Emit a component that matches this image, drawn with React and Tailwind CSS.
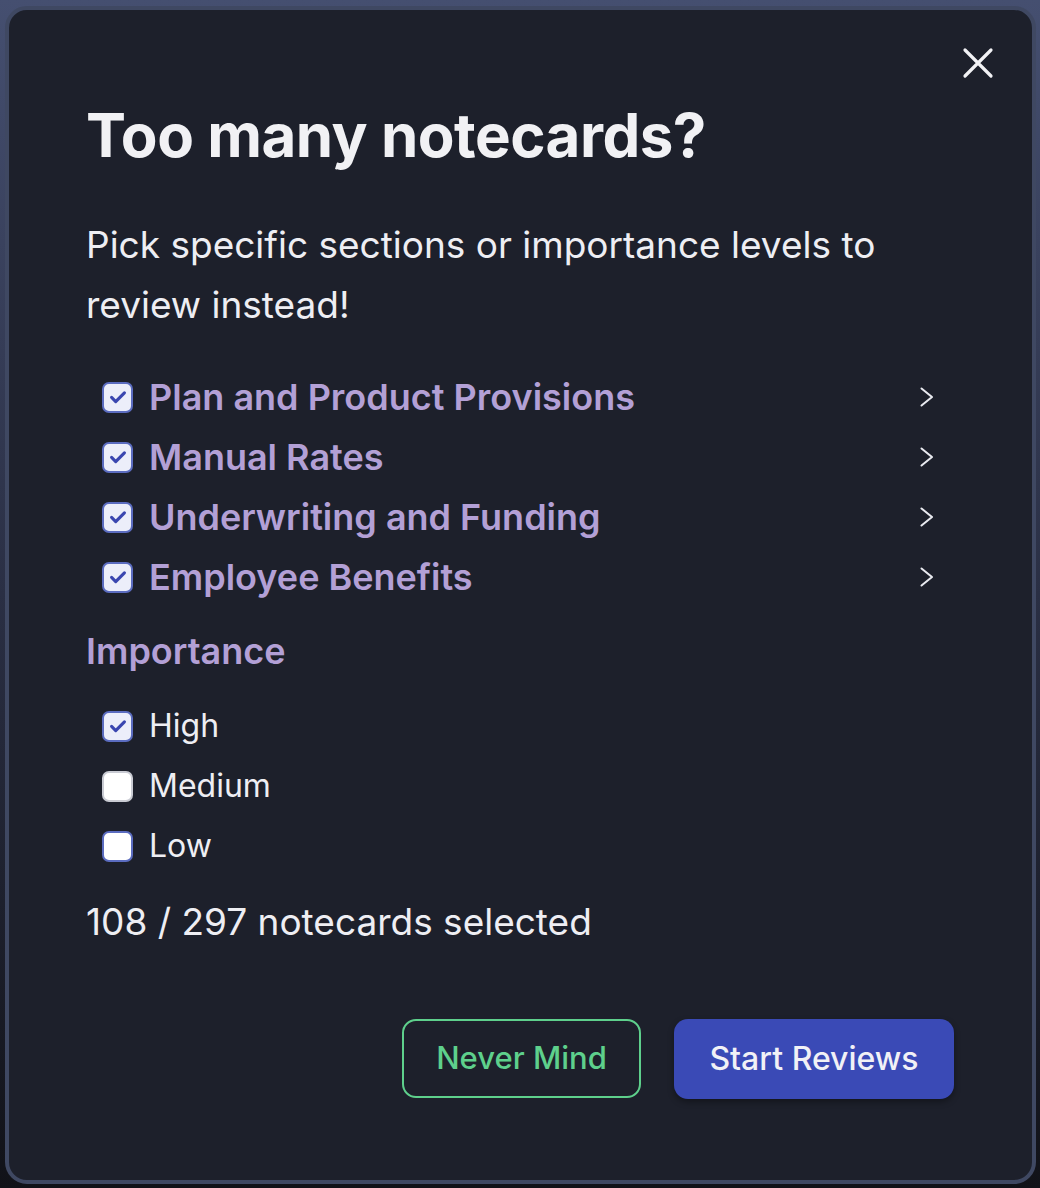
import React from "react";

const font = { fontFamily: "Inter, 'Noto Sans', sans-serif" };

function Check({ checked, blue }) {
  return (
    <span
      className={
        "flex h-[31px] w-[31px] shrink-0 items-center justify-center rounded-[7px] border-2 " +
        (checked ? "border-[#5b6cc0] bg-[#eceefa]" : blue ? "border-[#5b6cc0] bg-white" : "border-[#c9cbd3] bg-white")
      }
    >
      {checked && (
        <svg width="22" height="22" viewBox="0 0 24 24" fill="none">
          <path d="M5 12.5l4.5 4.5L19 7.5" stroke="#3a46b0" strokeWidth="3.4" strokeLinecap="round" strokeLinejoin="round" />
        </svg>
      )}
    </span>
  );
}

function Section({ label }) {
  return (
    <div className="flex h-[60px] items-center pl-4 pr-[97px]">
      <Check checked />
      <span className="ml-[16px] text-[36px] font-semibold text-[#b3a0d6]">{label}</span>
      <svg className="ml-auto" width="16" height="24" viewBox="0 0 16 24" fill="none">
        <path d="M2.5 3.5L13 12 2.5 20.5" stroke="#e9eaf0" strokeWidth="2" strokeLinecap="round" strokeLinejoin="round" />
      </svg>
    </div>
  );
}

function Level({ label, checked, blue }) {
  return (
    <div className="flex h-[60px] items-center pl-4">
      <Check checked={checked} blue={blue} />
      <span className="ml-[16px] text-[32px] text-[#eeeef3]">{label}</span>
    </div>
  );
}

export default function App() {
  return (
    <div className="h-[1188px] w-[1040px] overflow-hidden bg-[linear-gradient(to_bottom,#454f70_0%,#2a2f44_50%,#111218_100%)]" style={font}>
      <div className="relative ml-[5px] mt-[6px] h-[1178px] w-[1031px] rounded-[22px] border-[4px] border-[#3f4862] bg-[#1d202b] pl-[77px] pt-[86px]">
        <button className="absolute right-[34px] top-[33px] p-1">
          <svg width="32" height="32" viewBox="0 0 32 32" fill="none">
            <path d="M3 3L29 29M29 3L3 29" stroke="#f2f2f5" strokeWidth="3.2" strokeLinecap="round" />
          </svg>
        </button>
        <h1 className="text-[60px] font-bold leading-[78px] tracking-[-0.5px] text-[#f1f1f4]">Too many notecards?</h1>
        <p className="mt-[41px] w-[840px] text-[37px] leading-[60px] text-[#eeeef3]">
          Pick specific sections or importance levels to review instead!
        </p>
        <div className="mt-[32px]">
          <Section label="Plan and Product Provisions" />
          <Section label="Manual Rates" />
          <Section label="Underwriting and Funding" />
          <Section label="Employee Benefits" />
        </div>
        <div className="mt-[14px] text-[36px] font-semibold leading-[60px] text-[#b3a0d6]">Importance</div>
        <div className="mt-[15px]">
          <Level label="High" checked />
          <Level label="Medium" />
          <Level label="Low" blue />
        </div>
        <div className="mt-[16px] text-[37px] leading-[60px] text-[#eeeef3]">108 / 297 notecards selected</div>
        <div className="mt-[67px] flex justify-end gap-[33px] pr-[78px]">
          <button className="h-[79px] w-[239px] rounded-[14px] border-2 border-[#5ed08c] text-[31px] font-medium text-[#5ed08c]">
            Never Mind
          </button>
          <button className="h-[80px] w-[280px] rounded-[14px] bg-[#3a4ab6] text-[32px] font-medium text-[#f1f1f6] shadow-[0_3px_6px_rgba(0,0,0,0.35)]">
            Start Reviews
          </button>
        </div>
      </div>
    </div>
  );
}
